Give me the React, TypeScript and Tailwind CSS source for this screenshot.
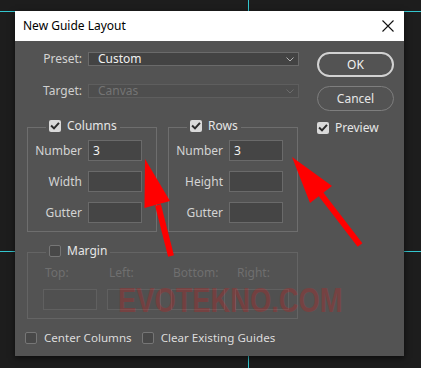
import React from "react";

const font = { fontFamily: '"Noto Sans", "Open Sans", sans-serif' };

function Check({ checked }: { checked: boolean }) {
  if (checked) {
    return (
      <div className="w-[12px] h-[12px] rounded-[2px] bg-[#d9d9d9] flex items-center justify-center shrink-0">
        <svg width="10" height="10" viewBox="0 0 10 10">
          <path d="M1.8 5.2 L4 7.4 L8.3 2.6" stroke="#2b2b2b" strokeWidth="2" fill="none" strokeLinecap="square" />
        </svg>
      </div>
    );
  }
  return <div className="w-[12px] h-[12px] rounded-[2px] bg-[#484848] border border-[#767676] shrink-0" />;
}

function Chevron({ color }: { color: string }) {
  return (
    <svg width="8" height="5" viewBox="0 0 8 5" className="shrink-0">
      <path d="M0.5 0.5 L4 4 L7.5 0.5" stroke={color} strokeWidth="1" fill="none" />
    </svg>
  );
}

function Legend({ checked, label }: { checked: boolean; label: string }) {
  return (
    <div className="-mt-[8px] ml-[18px] w-fit px-[3px] bg-[#535353] h-[12px] flex items-center gap-[6px]">
      <Check checked={checked} />
      <span className="text-[12px] leading-[12px] text-[#e6e6e6]">{label}</span>
    </div>
  );
}

function InputRow({ label, value }: { label: string; value?: string }) {
  return (
    <div className="flex items-center">
      <span className="w-[54px] text-right text-[12px] text-[#d4d4d4] leading-[21px]">{label}</span>
      <div className="ml-[6px] w-[54px] h-[21px] bg-[#454545] border border-[#6a6a6a] flex items-center pl-[4px] text-[12px] text-[#f2f2f2]">
        {value}
      </div>
    </div>
  );
}

function GroupBox({ checked, label, rows }: { checked: boolean; label: string; rows: [string, string?][] }) {
  return (
    <div className="w-[130px] border border-[#6e6e6e] pb-[8px]">
      <Legend checked={checked} label={label} />
      <div className="mt-[8px] flex flex-col gap-[10px]">
        {rows.map(([l, v]) => (
          <InputRow key={l} label={l} value={v} />
        ))}
      </div>
    </div>
  );
}

export default function App() {
  return (
    <div className="relative w-[421px] h-[368px] bg-[#1d1d1d] overflow-hidden" style={font}>
      {/* guides */}
      <div className="absolute left-[248px] top-0 w-[1px] h-[368px] bg-[#33c6cf]" />
      <div className="absolute left-0 top-[11px] w-[421px] h-[1px] bg-[#33c6cf]" />
      <div className="absolute left-0 top-[251px] w-[421px] h-[1px] bg-[#33c6cf]" />

      <div className="relative ml-[15px] pt-[11px] w-[389px]">
        <div className="w-[389px] shadow-[0_2px_6px_rgba(0,0,0,0.6)]">
          {/* title bar */}
          <div className="h-[30px] bg-white flex items-center justify-between pl-[8px] pr-[10px]">
            <span className="text-[12px] text-black">New Guide Layout</span>
            <svg width="12" height="12" viewBox="0 0 12 12">
              <path d="M0.5 0.5 L11.5 11.5 M11.5 0.5 L0.5 11.5" stroke="#111" strokeWidth="1.1" />
            </svg>
          </div>
          {/* body */}
          <div className="h-[315px] bg-[#535353] flex">
            <div className="w-[284px] flex flex-col pt-[11px]">
              <div className="flex items-center h-[14px]">
                <span className="w-[67px] text-right text-[12px] text-[#d4d4d4]">Preset:</span>
                <div className="ml-[6px] w-[211px] h-[14px] bg-[#434343] border border-[#6a6a6a] flex items-center justify-between pl-[9px] pr-[4px]">
                  <span className="text-[12px] leading-[12px] text-[#f0f0f0]">Custom</span>
                  <Chevron color="#b4b4b4" />
                </div>
              </div>
              <div className="flex items-center h-[14px] mt-[18px]">
                <span className="w-[67px] text-right text-[12px] text-[#cfcfcf]">Target:</span>
                <div className="ml-[6px] w-[211px] h-[14px] bg-[#4e4e4e] border border-[#5e5e5e] flex items-center justify-between pl-[9px] pr-[4px]">
                  <span className="text-[12px] leading-[12px] text-[#747474]">Canvas</span>
                  <Chevron color="#6c6c6c" />
                </div>
              </div>

              <div className="mt-[29px] ml-[12px] flex gap-[11px]">
                <GroupBox checked label="Columns" rows={[["Number", "3"], ["Width"], ["Gutter"]]} />
                <GroupBox checked label="Rows" rows={[["Number", "3"], ["Height"], ["Gutter"]]} />
              </div>

              <div className="mt-[20px] ml-[12px] w-[271px] border border-[#646464] pb-[8px]">
                <Legend checked={false} label="Margin" />
                <div className="mt-[8px] ml-[15px] grid grid-cols-[64px_64px_64px_64px]">
                  {["Top:", "Left:", "Bottom:", "Right:"].map((t) => (
                    <span key={t} className="pl-[2px] text-[12px] leading-[16px] h-[16px] text-[#6f6f6f]">{t}</span>
                  ))}
                </div>
                <div className="mt-[8px] ml-[15px] grid grid-cols-[64px_64px_64px_64px]">
                  {[0, 1, 2, 3].map((i) => (
                    <div key={i} className="w-[54px] h-[21px] bg-[#505050] border border-[#606060]" />
                  ))}
                </div>
              </div>

              <div className="mt-[13px] ml-[10px] flex items-center h-[12px]">
                <Check checked={false} />
                <span className="ml-[7px] text-[11.6px] text-[#dcdcdc]">Center Columns</span>
                <div className="ml-[10px]">
                  <Check checked={false} />
                </div>
                <span className="ml-[7px] text-[11.6px] text-[#dcdcdc]">Clear Existing Guides</span>
              </div>
            </div>

            <div className="ml-[18px] w-[77px] flex flex-col pt-[11px]">
              <div className="h-[25px] rounded-full border-2 border-[#d2d2d2] flex items-center justify-center text-[12px] text-[#f2f2f2]">OK</div>
              <div className="mt-[9px] h-[25px] rounded-full border border-[#7e7e7e] flex items-center justify-center text-[12px] text-[#e6e6e6]">Cancel</div>
              <div className="mt-[11px] flex items-center h-[12px]">
                <Check checked />
                <span className="ml-[6px] text-[12px] text-[#e6e6e6]">Preview</span>
              </div>
            </div>
          </div>
        </div>
      </div>

      {/* watermark */}
      <div className="absolute left-[118px] top-[280px] text-[35px] leading-[40px] font-bold text-[#ff0000]/20 scale-x-[0.78] origin-left whitespace-nowrap" style={{ fontFamily: '"Liberation Sans", sans-serif' }}>
        EVOTEKNO.COM
      </div>

      {/* annotation arrows */}
      <svg className="absolute left-0 top-0" width="421" height="368" viewBox="0 0 421 368">
        <line x1="171" y1="256" x2="158" y2="205" stroke="#ff0000" strokeWidth="6" />
        <polygon points="145,159 170,201 144.5,208" fill="#ff0000" />
        <line x1="360" y1="245" x2="320" y2="193" stroke="#ff0000" strokeWidth="6" />
        <polygon points="292,157 332,186 310,203" fill="#ff0000" />
      </svg>
    </div>
  );
}
